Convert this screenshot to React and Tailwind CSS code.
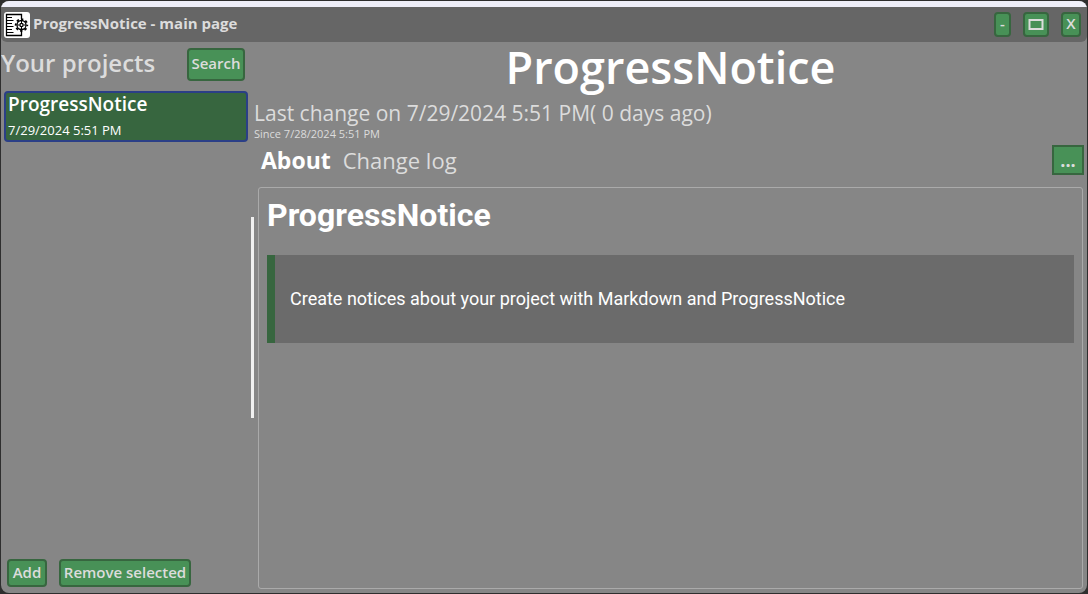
const button =
  "flex items-center justify-center rounded border-2 border-[#37663f] bg-[#489157] font-semibold text-[#dcdcdc]";

function Logo() {
  return (
    <svg className="size-[26px] shrink-0 rounded-[3px] bg-white" viewBox="0 0 26 26" fill="none" stroke="#000" aria-hidden="true">
      <path d="M17.500 7V2.500H2.500V23.500H17.500V19" strokeWidth="1.300" />
      <path d="M3 5.500H8M3 8.500H9.500M3 11.500H8M3 14.500H9.500M3 17.500H8M3 20.500H9.500" strokeWidth="1" />
      <circle cx="17.500" cy="13" r="4.500" strokeWidth="1.300" />
      <circle cx="17.500" cy="13" r="5.800" strokeWidth="1.800" strokeDasharray="2.400 2.155" strokeDashoffset="1.200" />
      <circle cx="17.500" cy="13" r="1.600" strokeWidth="1.300" />
      <path d="M17.500 9V11M17.500 15V17M13.500 13H15.500M19.500 13H21.500" strokeWidth="1" />
    </svg>
  );
}

function TitleBar() {
  return (
    <header className="flex h-[35px] items-center rounded-b-md bg-[#666] pr-[6px] pl-[3px]">
      <Logo />
      <span className="ml-[3px] flex-1 pb-1 text-[15px] leading-5 font-bold text-[#dcdcdc]">ProgressNotice - main page</span>
      <div className="flex gap-3">
        <button aria-label="Minimize" className={`${button} h-[25px] w-[17px] pb-[2px] text-[15px]`}>-</button>
        <button aria-label="Maximize" className={`${button} h-[25px] w-[26px]`}>
          <svg width="16" height="11" viewBox="0 0 16 11" fill="none" aria-hidden="true">
            <path d="M1.500 1H14.500V10H1.500Z" stroke="#dcdcdc" strokeWidth="2" />
          </svg>
        </button>
        <button aria-label="Close" className={`${button} h-[25px] w-5 pb-[2px] text-[15px]`}>X</button>
      </div>
    </header>
  );
}

function Sidebar() {
  return (
    <aside className="flex w-[250px] shrink-0 flex-col">
      <div className="flex items-center justify-between pt-[6px] pr-[6px]">
        <h2 className="pb-1 text-2xl leading-7 font-semibold text-[#dcdcdc]">Your projects</h2>
        <button className={`${button} h-[33px] w-[58px] pb-[2px] text-[15px]`}>Search</button>
      </div>
      <ul className="flex-1 pt-[10px] pr-[3px] pl-[3px]">
        <li>
          <button className="block h-[51px] w-full rounded border-2 border-[#2b3f87] bg-[#37663f] pl-[2px] text-left text-white">
            <span className="block text-[19px] leading-[22px] font-semibold">ProgressNotice</span>
            <span className="block pt-[6px] text-[13px] leading-[19px]">7/29/2024 5:51 PM</span>
          </button>
        </li>
      </ul>
      <div className="flex gap-3 pb-[6px] pl-[6px]">
        <button className={`${button} h-7 w-10 pb-[2px] text-[15px]`}>Add</button>
        <button className={`${button} h-7 w-[132px] pb-[2px] text-[15px]`}>Remove selected</button>
      </div>
    </aside>
  );
}

function ProjectView() {
  return (
    <main className="flex min-w-0 flex-1 flex-col">
      <h1 className="text-center text-[45px] leading-[50px] font-semibold text-white">ProgressNotice</h1>
      <p className="pt-[7px] text-[21px] leading-7 text-[#dcdcdc]">Last change on 7/29/2024 5:51 PM( 0 days ago)</p>
      <p className="text-[11px] leading-[14px] text-[#dcdcdc]">Since 7/28/2024 5:51 PM</p>
      <div className="flex items-center justify-between pt-[3px] pr-[3px] pl-[7px]">
        <nav className="flex items-baseline gap-3 leading-8">
          <button className="text-[23px] font-bold text-white">About</button>
          <button className="text-[22px] text-[#dcdcdc]">Change log</button>
        </nav>
        <button aria-label="More" className="h-[30px] w-8 border-2 border-[#37663f] bg-[#489157] text-lg leading-6 font-bold text-[#dcdcdc]">...</button>
      </div>
      <article className="mt-[11px] mr-1 mb-1 ml-1 flex-1 rounded-[3px] border border-[#aaa] px-2 pt-[7px] font-['Roboto',sans-serif] text-white">
        <h2 className="text-[32px] leading-10 font-bold">ProgressNotice</h2>
        <blockquote className="mt-5 flex h-[88px] items-center border-l-8 border-[#37663f] bg-[#6b6b6b] pl-[15px] text-lg">
          Create notices about your project with Markdown and ProgressNotice
        </blockquote>
      </article>
    </main>
  );
}

export default function App() {
  return (
    <div className="flex min-h-screen flex-col bg-[#2e2e2e] p-px font-['Open_Sans',sans-serif]">
      <div className="flex flex-1 flex-col overflow-hidden rounded-lg bg-[#868686]">
        <div className="h-[6px] bg-[#f0f0fa]" />
        <TitleBar />
        <div className="flex flex-1">
          <Sidebar />
          <div className="flex w-[3px] shrink-0 items-center">
            <div className="h-[201px] w-full bg-[#f0f0f0]" />
          </div>
          <ProjectView />
        </div>
      </div>
    </div>
  );
}
